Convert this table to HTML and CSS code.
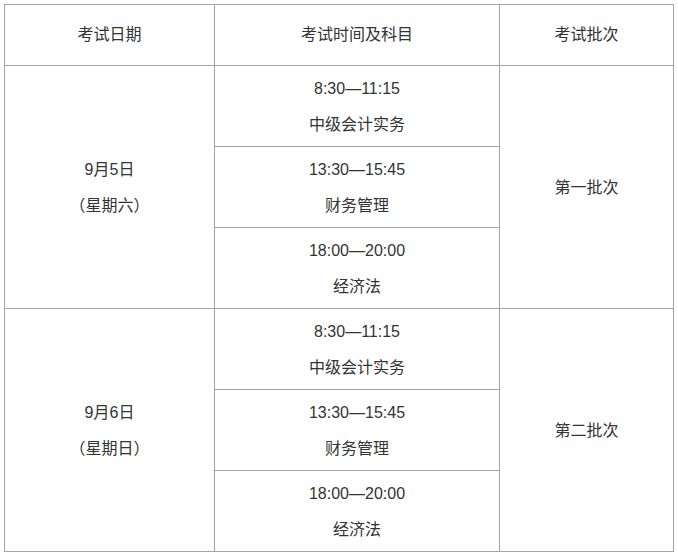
FILE: index.html
```html
<!DOCTYPE html>
<html lang="zh-CN">
<head>
<meta charset="utf-8">
<title>考试安排</title>
<link rel="stylesheet" href="styles.css">
</head>
<body>
<table class="exam">
  <colgroup>
    <col class="c-date">
    <col class="c-subj">
    <col class="c-batch">
  </colgroup>
  <thead>
    <tr>
      <th class="head">考试日期</th>
      <th class="head">考试时间及科目</th>
      <th class="head">考试批次</th>
    </tr>
  </thead>
  <tbody>
    <tr>
      <td rowspan="3" class="span"><div class="line">9月5日</div><div class="line">（星期六）</div></td>
      <td class="sub"><div class="line">8:30—11:15</div><div class="line">中级会计实务</div></td>
      <td rowspan="3" class="span"><div class="line">第一批次</div></td>
    </tr>
    <tr>
      <td class="sub"><div class="line">13:30—15:45</div><div class="line">财务管理</div></td>
    </tr>
    <tr>
      <td class="sub"><div class="line">18:00—20:00</div><div class="line">经济法</div></td>
    </tr>
    <tr>
      <td rowspan="3" class="span"><div class="line">9月6日</div><div class="line">（星期日）</div></td>
      <td class="sub"><div class="line">8:30—11:15</div><div class="line">中级会计实务</div></td>
      <td rowspan="3" class="span"><div class="line">第二批次</div></td>
    </tr>
    <tr>
      <td class="sub"><div class="line">13:30—15:45</div><div class="line">财务管理</div></td>
    </tr>
    <tr>
      <td class="sub"><div class="line">18:00—20:00</div><div class="line">经济法</div></td>
    </tr>
  </tbody>
</table>
</body>
</html>
```
FILE: styles.css
```css
html, body {
  margin: 0;
  background: #ffffff;
}
body {
  padding: 4px 0 0 4px;
  font-family: "Liberation Sans", "Noto Sans CJK SC", sans-serif;
  font-size: 16px;
  color: #333333;
}
.exam {
  border-collapse: separate;
  border-spacing: 0;
  table-layout: fixed;
  width: 670px;
  border-left: 1px solid #a3a3ad;
  border-top: 1px solid #a3a3ad;
}
.c-date { width: 210px; }
.c-subj { width: 285px; }
.c-batch { width: 174px; }
.exam th,
.exam td {
  border-right: 1px solid #a3a3ad;
  border-bottom: 1px solid #a3a3ad;
  text-align: center;
  vertical-align: middle;
  font-weight: normal;
  box-sizing: border-box;
}
.head {
  height: 61px;
  padding: 12px 0;
  line-height: 36px;
}
.sub {
  height: 81px;
  padding: 5px 0 3px;
}
.span {
  padding: 2px 0 0;
}
.line {
  line-height: 36px;
  white-space: nowrap;
}
```
